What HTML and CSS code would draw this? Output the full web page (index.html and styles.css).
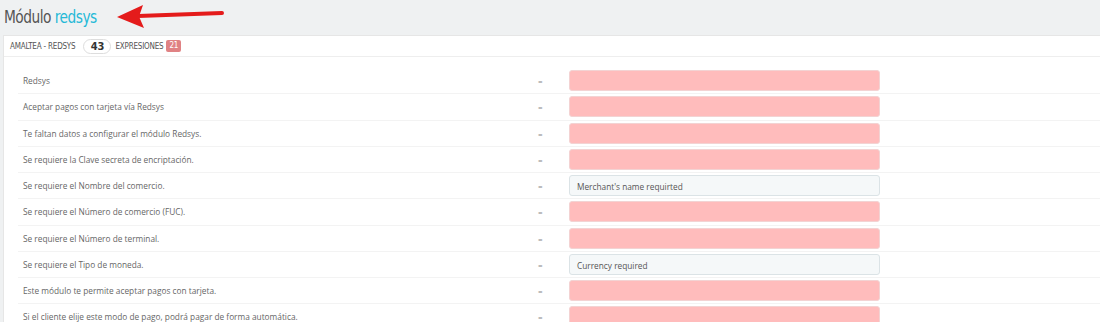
FILE: index.html
```html
<!DOCTYPE html>
<html lang="es">
<head>
    <meta charset="UTF-8">
    <title>Módulo redsys</title>
    <link rel="stylesheet" href="styles.css">
</head>
<body>
    <div class="page-head">
        <h2 class="page-title">Módulo <span class="accent">redsys</span></h2>
        <svg class="arrow" width="110" height="26" viewBox="0 0 110 26">
            <path d="M106 11 L22 14" stroke="#e41b1b" stroke-width="4" stroke-linecap="round" fill="none"/>
            <path d="M1 15 L27 3 L23 14.5 L28 26 Z" fill="#e41b1b"/>
        </svg>
    </div>

    <div class="panel">
        <div class="panel-heading">
            <span>AMALTEA - REDSYS</span>
            <span class="count">43</span>
            <span>EXPRESIONES</span>
            <span class="badge">21</span>
        </div>

        <div class="rows">
            <div class="row">
                <div class="label">Redsys</div>
                <div class="eq">=</div>
                <div class="field empty"></div>
            </div>
            <div class="row">
                <div class="label">Aceptar pagos con tarjeta vía Redsys</div>
                <div class="eq">=</div>
                <div class="field empty"></div>
            </div>
            <div class="row">
                <div class="label">Te faltan datos a configurar el módulo Redsys.</div>
                <div class="eq">=</div>
                <div class="field empty"></div>
            </div>
            <div class="row">
                <div class="label">Se requiere la Clave secreta de encriptación.</div>
                <div class="eq">=</div>
                <div class="field empty"></div>
            </div>
            <div class="row">
                <div class="label">Se requiere el Nombre del comercio.</div>
                <div class="eq">=</div>
                <div class="field">Merchant's name requirted</div>
            </div>
            <div class="row">
                <div class="label">Se requiere el Número de comercio (FUC).</div>
                <div class="eq">=</div>
                <div class="field empty"></div>
            </div>
            <div class="row">
                <div class="label">Se requiere el Número de terminal.</div>
                <div class="eq">=</div>
                <div class="field empty"></div>
            </div>
            <div class="row">
                <div class="label">Se requiere el Tipo de moneda.</div>
                <div class="eq">=</div>
                <div class="field">Currency required</div>
            </div>
            <div class="row">
                <div class="label">Este módulo te permite aceptar pagos con tarjeta.</div>
                <div class="eq">=</div>
                <div class="field empty"></div>
            </div>
            <div class="row">
                <div class="label">Si el cliente elije este modo de pago, podrá pagar de forma automática.</div>
                <div class="eq">=</div>
                <div class="field empty"></div>
            </div>
        </div>
    </div>
</body>
</html>
```

FILE: styles.css
```css
body {
    margin: 0;
    padding: 0;
    background-color: #eff1f2;
    font-family: "Open Sans", sans-serif;
    color: #666;
    overflow: hidden;
}

.page-head {
    position: relative;
    height: 35px;
    padding-left: 4px;
}
.page-title {
    margin: 0;
    padding-top: 6px;
    font-family: "DejaVu Sans Condensed", "DejaVu Sans", sans-serif;
    font-weight: normal;
    font-size: 18px;
    letter-spacing: -0.6px;
    color: #555;
    transform: scaleX(0.85);
    transform-origin: left;
}
.accent {
    color: #25b9d7;
}
.arrow {
    position: absolute;
    left: 116px;
    top: 2px;
}

.panel {
    margin-left: 3px;
    background-color: #fff;
    border: 1px solid #e6e6e6;
    border-right: none;
    height: 300px;
}
.panel-heading {
    display: flex;
    align-items: center;
    gap: 4px;
    height: 20px;
    padding-left: 6px;
    border-bottom: 1px solid #eee;
    font-family: "DejaVu Sans Condensed", "DejaVu Sans", sans-serif;
    font-size: 8px;
    letter-spacing: -0.2px;
    color: #555;
}
.count {
    display: inline-block;
    width: 26px;
    height: 13px;
    line-height: 13px;
    border: 1px solid #ddd;
    border-radius: 8px;
    text-align: center;
    font-size: 11px;
    font-weight: bold;
    color: #333;
    margin: 0 0 0 4px;
}
.badge {
    display: inline-block;
    margin-left: -1px;
    padding: 0 3px;
    height: 12px;
    line-height: 12px;
    background-color: #e08284;
    color: #fff;
    border-radius: 2px;
    font-size: 8px;
}

.rows {
    padding: 10px 0 0 14px;
}
.row {
    display: flex;
    align-items: center;
    height: 26.25px;
    border-top: 1px solid #f3f3f3;
    box-sizing: border-box;
}
.row:first-child {
    border-top: none;
}
.label {
    width: 515px;
    padding-left: 5px;
    font-size: 8.3px;
    color: #666;
}
.eq {
    width: 31px;
    font-size: 8px;
    color: #888;
}
.field {
    width: 311px;
    height: 21px;
    line-height: 21px;
    box-sizing: border-box;
    padding-left: 7px;
    border: 1px solid #dbe3e6;
    border-radius: 3px;
    background-color: #f5f8f9;
    font-size: 8.3px;
    color: #555;
}
.field.empty {
    background-color: #ffbcbc;
    border-color: #f3d3d3;
}
```
